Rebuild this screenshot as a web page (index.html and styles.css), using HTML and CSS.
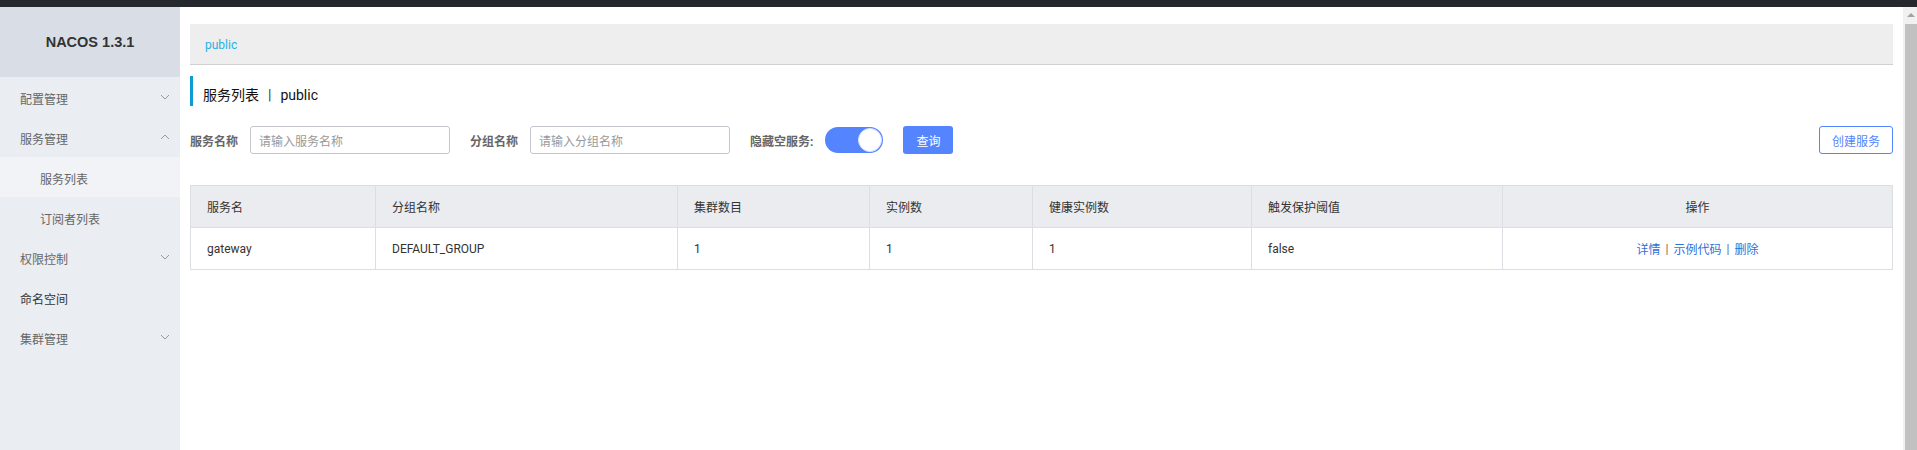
FILE: index.html
```html
<!DOCTYPE html>
<html lang="zh-CN">
<head>
<meta charset="utf-8">
<title>Nacos</title>
<link rel="stylesheet" href="styles.css">
</head>
<body>
<div class="topbar"></div>
<div class="frame">
  <div class="app">
    <aside class="sidebar">
      <div class="brand">NACOS 1.3.1</div>
      <ul class="menu">
        <li class="menu-item">
          <span>配置管理</span>
          <svg class="chev" viewBox="0 0 10 6" width="10" height="6"><polyline points="1,1 5,5 9,1"/></svg>
        </li>
        <li class="menu-item">
          <span>服务管理</span>
          <svg class="chev" viewBox="0 0 10 6" width="10" height="6"><polyline points="1,5 5,1 9,5"/></svg>
        </li>
        <li class="menu-item sub active"><span>服务列表</span></li>
        <li class="menu-item sub"><span>订阅者列表</span></li>
        <li class="menu-item">
          <span>权限控制</span>
          <svg class="chev" viewBox="0 0 10 6" width="10" height="6"><polyline points="1,1 5,5 9,1"/></svg>
        </li>
        <li class="menu-item dark"><span>命名空间</span></li>
        <li class="menu-item">
          <span>集群管理</span>
          <svg class="chev" viewBox="0 0 10 6" width="10" height="6"><polyline points="1,1 5,5 9,1"/></svg>
        </li>
      </ul>
    </aside>
    <main class="main">
      <div class="crumb"><span class="crumb-link">public</span></div>
      <div class="title">服务列表<span class="title-sep">|</span>public</div>
      <div class="search">
        <label class="field-label">服务名称</label>
        <div class="input"><span class="placeholder">请输入服务名称</span></div>
        <label class="field-label gap">分组名称</label>
        <div class="input"><span class="placeholder">请输入分组名称</span></div>
        <label class="field-label gap">隐藏空服务:</label>
        <div class="switch"><span class="knob"></span></div>
        <button class="btn-primary">查询</button>
        <div class="spacer"></div>
        <button class="btn-outline">创建服务</button>
      </div>
      <div class="grid">
        <div class="cell head">服务名</div>
        <div class="cell head">分组名称</div>
        <div class="cell head">集群数目</div>
        <div class="cell head">实例数</div>
        <div class="cell head">健康实例数</div>
        <div class="cell head">触发保护阈值</div>
        <div class="cell head center">操作</div>
        <div class="cell">gateway</div>
        <div class="cell">DEFAULT_GROUP</div>
        <div class="cell">1</div>
        <div class="cell">1</div>
        <div class="cell">1</div>
        <div class="cell">false</div>
        <div class="cell center"><a class="link">详情</a><span class="sep">|</span><a class="link">示例代码</a><span class="sep">|</span><a class="link">删除</a></div>
      </div>
    </main>
  </div>
  <div class="scrollbar">
    <div class="arrow"></div>
    <div class="thumb"></div>
  </div>
</div>
</body>
</html>
```

FILE: styles.css
```css
* { box-sizing: border-box; }
html, body {
  margin: 0;
  padding: 0;
  height: 450px;
  overflow: hidden;
  background: #fff;
  font-family: Roboto, "Noto Sans CJK SC", sans-serif;
  font-size: 12px;
  color: #333;
}
.topbar {
  height: 7px;
  background: #25292e;
}
.frame {
  display: flex;
  height: 443px;
}
.app {
  flex: 1;
  display: flex;
  min-width: 0;
}
.sidebar {
  width: 180px;
  flex: none;
  background: #eaedf2;
}
.brand {
  height: 70px;
  background: #d9dee6;
  display: flex;
  align-items: center;
  justify-content: center;
  font-family: "Liberation Sans", Arial, sans-serif;
  font-weight: bold;
  font-size: 14.5px;
  color: #333;
}
.menu {
  list-style: none;
  margin: 0;
  padding: 0;
}
.menu-item {
  height: 40px;
  display: flex;
  align-items: center;
  justify-content: space-between;
  padding: 0 10px 0 20px;
  color: #666;
  font-size: 12px;
}
.menu-item span {
  padding-top: 2px;
}
.menu-item.sub {
  padding-left: 40px;
}
.menu-item.active {
  background: #f2f3f7;
}
.menu-item.dark {
  color: #333;
}
.chev {
  fill: none;
  stroke: #999;
  stroke-width: 1;
}
.main {
  flex: 1;
  min-width: 0;
  padding: 17px 10px 0 10px;
}
.crumb {
  height: 41px;
  background: #eee;
  border-bottom: 1px solid #d0d0d0;
  padding: 2px 0 0 15px;
  display: flex;
  align-items: center;
}
.crumb-link {
  color: #26b2e4;
  font-size: 12px;
}
.title {
  margin-top: 11px;
  height: 30px;
  border-left: 3px solid #0d9bd6;
  padding: 8px 0 0 10px;
  line-height: 22px;
  font-size: 14px;
  color: #111;
}
.title-sep {
  margin: 0 9px;
  color: #333;
}
.search {
  margin-top: 20px;
  height: 28px;
  display: flex;
  align-items: center;
}
.field-label {
  font-weight: bold;
  color: #666;
  font-size: 12px;
  margin-right: 12px;
}
.field-label.gap {
  margin-left: 20px;
}
.input {
  width: 200px;
  height: 28px;
  border: 1px solid #c4c6cf;
  border-radius: 3px;
  padding: 0 8px;
  display: flex;
  align-items: center;
}
.placeholder {
  color: #999;
}
.switch {
  width: 58px;
  height: 26px;
  border-radius: 13px;
  background: #5584ff;
  display: flex;
  align-items: center;
  justify-content: flex-end;
  padding-right: 1px;
}
.knob {
  width: 24px;
  height: 24px;
  border-radius: 50%;
  background: #fff;
  border: 1px solid #d6e0ff;
}
.btn-primary {
  margin-left: 20px;
  width: 50px;
  height: 28px;
  border: none;
  border-radius: 3px;
  background: #5584ff;
  color: #fff;
  font-family: inherit;
  font-size: 12px;
  padding: 0;
}
.spacer {
  flex: 1;
}
.btn-outline {
  width: 74px;
  height: 28px;
  border: 1px solid #5584ff;
  border-radius: 3px;
  background: #fff;
  color: #5584ff;
  font-family: inherit;
  font-size: 12px;
  padding: 0;
}
.grid {
  margin-top: 31px;
  display: grid;
  grid-template-columns: 185px 302px 192px 163px 219px 251px 1fr;
  border-top: 1px solid #dcdee3;
  border-left: 1px solid #dcdee3;
}
.cell {
  height: 42px;
  padding: 0 16px;
  display: flex;
  align-items: center;
  border-right: 1px solid #dcdee3;
  border-bottom: 1px solid #dcdee3;
  font-size: 12px;
  color: #333;
  white-space: nowrap;
}
.cell.head {
  background: #ebecf0;
}
.cell.center {
  justify-content: center;
}
.link {
  color: #2f6fd8;
}
.sep {
  margin: 0 5px;
  color: #666;
}
.scrollbar {
  width: 14px;
  flex: none;
  background: #f1f1f1;
  display: flex;
  flex-direction: column;
  align-items: flex-end;
}
.arrow {
  height: 17px;
  width: 12px;
  display: flex;
  justify-content: center;
  padding-top: 6px;
}
.arrow::before {
  content: "";
  width: 0;
  height: 0;
  border-left: 4px solid transparent;
  border-right: 4px solid transparent;
  border-bottom: 4px solid #a3a3a3;
}
.thumb {
  width: 12px;
  flex: 1;
  background: #c1c1c1;
}
```
